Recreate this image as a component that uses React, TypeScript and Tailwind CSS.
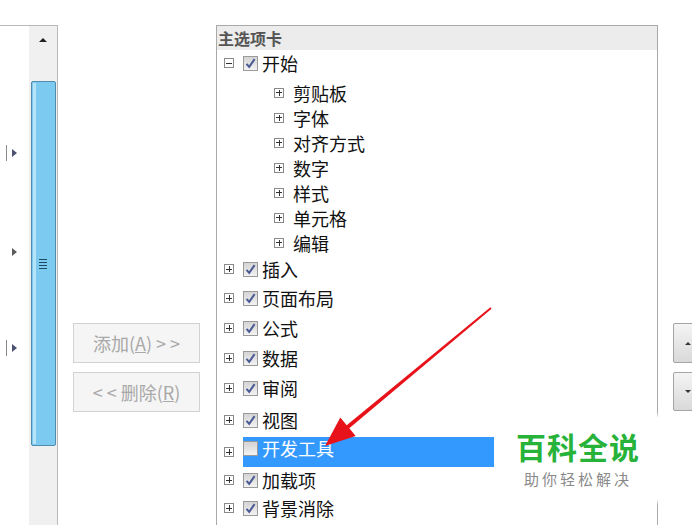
import { Fragment } from 'react'

const font = { fontFamily: '"Noto Sans CJK SC", "Noto Sans", sans-serif' }

function Expander({ open = false }: { open?: boolean }) {
  return (
    <span className="relative flex h-[10px] w-[10px] shrink-0 items-center justify-center border border-[#8a8a8a] bg-white">
      <span className="absolute h-px w-[6px] bg-[#333]" />
      {!open && <span className="absolute h-[6px] w-px bg-[#333]" />}
    </span>
  )
}

function Check({ checked = true }: { checked?: boolean }) {
  return (
    <span className="flex h-[15px] w-[15px] shrink-0 items-center justify-center border border-[#9a9a9a] bg-gradient-to-b from-[#d4d4d4] to-[#f2f2f2]">
      {checked && (
        <svg width="11" height="11" viewBox="0 0 11 11">
          <path d="M1.5 5.8 L4.2 8.8 L9.6 1.2" fill="none" stroke="#4b5a94" strokeWidth="2" />
        </svg>
      )}
    </span>
  )
}

const subItems = ['剪贴板', '字体', '对齐方式', '数字', '样式', '单元格', '编辑']

const topItems: { label: string; h: string; checked?: boolean; selected?: boolean }[] = [
  { label: '插入', h: 'h-[28px]' },
  { label: '页面布局', h: 'h-[30px]' },
  { label: '公式', h: 'h-[30px]' },
  { label: '数据', h: 'h-[30px]' },
  { label: '审阅', h: 'h-[30px]' },
  { label: '视图', h: 'h-[34px]' },
  { label: '开发工具', h: 'h-[30px]', checked: false, selected: true },
  { label: '加载项', h: 'h-[26px]' },
  { label: '背景消除', h: 'h-[30px]' },
]

function LeftPanel() {
  return (
    <div className="flex h-full w-[58px] shrink-0 border-t border-r border-[#b9b9b9]">
      <div className="flex w-[29px] flex-col">
        <div className="ml-[6px] mt-[117px] flex h-[20px] items-center gap-[5px]">
          <span className="h-[16px] w-px bg-[#8a8a8a]" />
          <span className="h-0 w-0 border-y-[4px] border-l-[5px] border-y-transparent border-l-[#4c5270]" />
        </div>
        <div className="ml-[12px] mt-[79px] flex h-[20px] items-center">
          <span className="h-0 w-0 border-y-[4px] border-l-[5px] border-y-transparent border-l-[#5c5c5c]" />
        </div>
        <div className="ml-[6px] mt-[76px] flex h-[20px] items-center gap-[5px]">
          <span className="h-[16px] w-px bg-[#8a8a8a]" />
          <span className="h-0 w-0 border-y-[4px] border-l-[5px] border-y-transparent border-l-[#4c5270]" />
        </div>
      </div>
      <div className="flex w-[28px] flex-col items-center bg-[#f0f0f0]">
        <span className="mt-[12px] h-0 w-0 border-x-[4px] border-b-[4px] border-x-transparent border-b-[#222]" />
        <div className="relative mt-[39px] flex h-[365px] w-[25px] items-center justify-center rounded-[2px] border border-[#4f8cae] bg-[#7ccaef]">
          <span className="absolute left-[1px] top-[1px] bottom-[1px] w-[3px] bg-[#b6e3f8]" />
          <div className="flex flex-col gap-[2px]">
            <span className="h-px w-[8px] bg-[#1f4a66]" />
            <span className="h-px w-[8px] bg-[#1f4a66]" />
            <span className="h-px w-[8px] bg-[#1f4a66]" />
            <span className="h-px w-[8px] bg-[#1f4a66]" />
          </div>
        </div>
      </div>
    </div>
  )
}

function MidButtons() {
  return (
    <div className="ml-[15px] flex w-[127px] shrink-0 flex-col gap-[9px] pt-[298px]">
      <div className="flex h-[40px] items-center justify-center border border-[#d2d2d2] bg-[#f5f5f5] text-[18px] text-[#a8a8a8]">
        添加(<u>A</u>)&nbsp;&gt;&nbsp;&gt;
      </div>
      <div className="flex h-[40px] items-center justify-center border border-[#d2d2d2] bg-[#f5f5f5] text-[18px] text-[#a8a8a8]">
        &lt;&nbsp;&lt;&nbsp;删除(<u>R</u>)
      </div>
    </div>
  )
}

function Tree() {
  return (
    <div className="ml-[16px] flex h-full w-[442px] shrink-0 flex-col border-t border-x border-[#a9a9a9] text-[18px] leading-none text-[#111]">
      <div className="flex h-[24px] items-center bg-[#ececec] pl-[1px] text-[16px] font-bold text-[#555]">
        主选项卡
      </div>
      <div className="flex h-[26px] items-center pl-[7px]">
        <Expander open />
        <span className="ml-[9px]"><Check /></span>
        <span className="ml-[4px]">开始</span>
      </div>
      <div className="flex flex-col pt-[4px]">
        {subItems.map((s) => (
          <div key={s} className="flex h-[25px] items-center pl-[57px]">
            <Expander />
            <span className="ml-[9px]">{s}</span>
          </div>
        ))}
      </div>
      {topItems.map((t) => (
        <Fragment key={t.label}>
          <div className={`flex ${t.h} items-center pl-[7px]`}>
            <Expander />
            {t.selected ? (
              <div className="ml-[9px] flex h-[30px] w-[251px] items-center self-start bg-[#3399ff] pb-[8px] text-white">
                <Check checked={false} />
                <span className="ml-[4px]">{t.label}</span>
              </div>
            ) : (
              <>
                <span className="ml-[9px]"><Check checked={t.checked !== false} /></span>
                <span className="ml-[4px]">{t.label}</span>
              </>
            )}
          </div>
        </Fragment>
      ))}
    </div>
  )
}

function RightButtons() {
  return (
    <div className="ml-[15px] flex w-[30px] shrink-0 flex-col gap-[9px] pt-[298px]">
      <div className="flex h-[40px] items-center justify-end rounded-[2px] border border-[#a5a5a5] bg-gradient-to-b from-[#f4f4f4] to-[#d9d9d9] pr-[11px]">
        <span className="h-0 w-0 border-x-[3px] border-b-[3px] border-x-transparent border-b-[#333]" />
      </div>
      <div className="flex h-[39px] items-center justify-end rounded-[2px] border border-[#a5a5a5] bg-gradient-to-b from-[#f4f4f4] to-[#d9d9d9] pr-[11px]">
        <span className="h-0 w-0 border-x-[3px] border-t-[3px] border-x-transparent border-t-[#333]" />
      </div>
    </div>
  )
}

export default function App() {
  return (
    <div className="relative h-[525px] w-[692px] overflow-hidden bg-white" style={font}>
      <div className="flex h-full pt-[25px]">
        <LeftPanel />
        <MidButtons />
        <Tree />
        <RightButtons />
      </div>

      <svg className="pointer-events-none absolute inset-0" width="692" height="525">
        <polygon
          points="491.6,308.8 349.3,428.3 355.7,436 325,446 340.3,417.6 346.7,425.3 490.4,307.2"
          fill="#e8131a"
        />
      </svg>

      <div className="absolute left-[505px] top-[417px] flex h-[83px] w-[162px] flex-col items-center justify-center bg-white pr-[16px] shadow-[0_0_4px_2px_white]">
        <span className="text-[30px] font-bold leading-none tracking-[1px] text-[#27b33a]">百科全说</span>
        <span className="mt-[10px] text-[15px] leading-none tracking-[3px] text-[#8a8a8a]">助你轻松解决</span>
      </div>
    </div>
  )
}
